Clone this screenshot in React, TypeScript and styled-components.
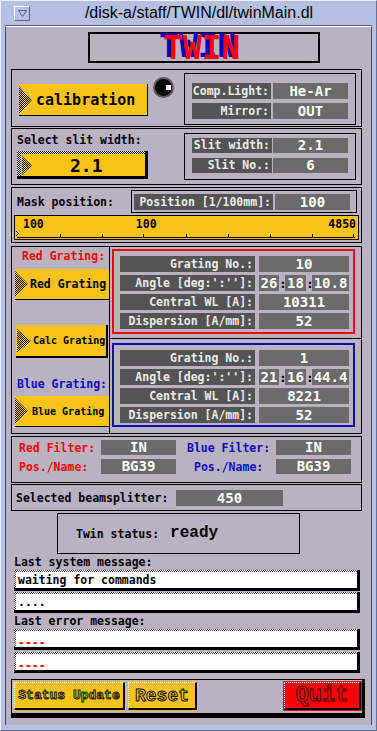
import React from 'react';
import styled, { createGlobalStyle } from 'styled-components';

const MONO = `"DejaVu Sans Mono", "Liberation Mono", monospace`;
const COURIER = `"Liberation Mono", "DejaVu Sans Mono", monospace`;
const YELLOW = '#f9c31a';
const PANEL = '#bab2c1';
const FRAME = '#b6c0e2';
const LABEL_BG = '#545454';
const VALUE_BG = '#6b6b6b';

const GlobalStyle = createGlobalStyle`
  html, body { margin: 0; padding: 0; background: ${FRAME}; }
  * { box-sizing: border-box; }
`;

const Window = styled.div`
  width: 377px;
  height: 731px;
  background: ${FRAME};
  border: 1px solid #eef1fb;
  border-right-color: #6b7394;
  border-bottom-color: #6b7394;
  padding: 0 4px 5px 4px;
  display: flex;
  flex-direction: column;
`;

const TitleBar = styled.div`
  height: 25px;
  display: flex;
  align-items: center;
  border-bottom: 1px solid #596080;
`;

const MenuButton = styled.div`
  width: 16px;
  height: 15px;
  margin-left: 9px;
  border: 1px solid #fff;
  border-right-color: #5d6486;
  border-bottom-color: #5d6486;
  display: flex;
  align-items: center;
  justify-content: center;
`;

const WindowTitle = styled.div`
  flex: 1;
  text-align: center;
  font-family: "Liberation Sans", Arial, sans-serif;
  font-size: 16px;
  color: #000;
  padding-right: 4px;
`;

const Content = styled.div`
  flex: 1;
  background: ${PANEL};
  border-top: 1px solid #fff;
  border-left: 1px solid #464a63;
  border-right: 1px solid #464a63;
  padding-top: 5px;
  display: flex;
  flex-direction: column;
`;

const TwinBox = styled.div`
  width: 232px;
  height: 31px;
  margin: 0 0 0 82px;
  border: 2px solid #000;
  display: flex;
  align-items: center;
  justify-content: center;
`;

const TwinText = styled.span`
  font-family: ${COURIER};
  font-weight: bold;
  font-size: 32px;
  line-height: 32px;
  color: #ff0000;
  text-shadow: -4px -2px 0 #0000c8;
  transform: scaleY(1.15);
  margin: 4px 4px 0 0;
`;

const Frame = styled.div<{ $mt: number; $h: number; $col?: boolean }>`
  width: 351px;
  height: ${p => p.$h}px;
  margin: ${p => p.$mt}px 0 0 5px;
  border: 1px solid #000;
  display: flex;
  flex-direction: ${p => (p.$col ? 'column' : 'row')};
  align-items: flex-start;
`;

const ReadBox = styled.div<{ $w: number; $h: number; $m: string; $pad: string; $gap: number }>`
  width: ${p => p.$w}px;
  height: ${p => p.$h}px;
  margin: ${p => p.$m};
  padding: ${p => p.$pad};
  border: 1px solid #000;
  display: flex;
  flex-direction: column;
  gap: ${p => p.$gap}px;
  flex-shrink: 0;
`;

const Row = styled.div<{ $gap: number }>`
  display: flex;
  align-items: center;
  gap: ${p => p.$gap}px;
`;

const Label = styled.div<{ $w: number; $h?: number }>`
  width: ${p => p.$w}px;
  height: ${p => p.$h ?? 16}px;
  line-height: ${p => p.$h ?? 16}px;
  background: ${LABEL_BG};
  color: #ececec;
  font-family: ${MONO};
  font-weight: bold;
  font-size: 11.5px;
  text-align: right;
  padding-right: 2px;
  white-space: nowrap;
  flex-shrink: 0;
`;

const Value = styled.div<{ $w: number; $h?: number }>`
  width: ${p => p.$w}px;
  height: ${p => p.$h ?? 16}px;
  line-height: ${p => p.$h ?? 16}px;
  background: ${VALUE_BG};
  color: #fff;
  font-family: ${MONO};
  font-weight: bold;
  font-size: 14px;
  text-align: center;
  white-space: nowrap;
  flex-shrink: 0;
`;

const Colon = styled.div`
  width: 6px;
  text-align: center;
  font-family: ${MONO};
  font-weight: bold;
  font-size: 13px;
  color: #000;
`;

const PlainText = styled.div<{ $color?: string; $m?: string }>`
  font-family: ${MONO};
  font-weight: bold;
  font-size: 11.5px;
  line-height: 14px;
  color: ${p => p.$color ?? '#000'};
  margin: ${p => p.$m ?? '0'};
  white-space: nowrap;
`;

const ArrowSvg = styled.svg`
  flex-shrink: 0;
  display: block;
`;

const ArrowMark = ({ id, w, h }: { id: string; w: number; h: number }) => (
  <ArrowSvg width={w} height={h} viewBox={`0 0 ${w} ${h}`}>
    <defs>
      <pattern id={id} width="2" height="2" patternUnits="userSpaceOnUse">
        <rect width="1" height="1" fill="#000" />
        <rect x="1" y="1" width="1" height="1" fill="#000" />
      </pattern>
    </defs>
    <polygon points={`0,0 ${w},${h / 2} 0,${h}`} fill={`url(#${id})`} />
  </ArrowSvg>
);

const YellowButton = styled.div<{ $w: number; $h: number; $m: string }>`
  width: ${p => p.$w}px;
  height: ${p => p.$h}px;
  margin: ${p => p.$m};
  background: ${YELLOW};
  display: flex;
  align-items: center;
  font-family: ${MONO};
  font-weight: bold;
  color: #000;
  white-space: nowrap;
  flex-shrink: 0;
  cursor: pointer;
`;

const CalButton = styled(YellowButton)`
  border-right: 1px solid #000;
  border-bottom: 1px solid #000;
  font-size: 15px;
  gap: 4px;
`;

const GratingButton = styled(YellowButton)<{ $size: number; $gap: number; $shadow?: boolean }>`
  font-size: ${p => p.$size}px;
  gap: ${p => p.$gap}px;
  border-bottom: ${p => (p.$shadow ? '2px' : '1px')} solid #000;
  border-right: ${p => (p.$shadow ? '2px solid #000' : 'none')};
  padding-left: ${p => (p.$shadow ? 1 : 0)}px;
`;

const SlitButton = styled.div`
  width: 131px;
  height: 28px;
  margin-top: 4px;
  padding: 3px 0 0 4px;
  background: repeating-conic-gradient(#000 0% 25%, #fff 0% 50%) 0 0 / 2px 2px;
  border-right: 3px solid #000;
  border-bottom: 3px solid #000;
  cursor: pointer;
`;

const SlitFace = styled.div`
  height: 100%;
  background: ${YELLOW};
  display: flex;
  align-items: center;
  padding-left: 1px;
  font-family: ${MONO};
  font-weight: bold;
  font-size: 18px;
  color: #000;
`;

const SlitValue = styled.span`
  margin-left: 38px;
`;

const Lamp = styled.div`
  width: 21px;
  height: 21px;
  margin: 7px 0 0 5px;
  border-radius: 50%;
  background: #000;
  border: 2px solid #5c5c5c;
  position: relative;
  flex-shrink: 0;

  &::after {
    content: '';
    position: absolute;
    left: 11px;
    top: 6px;
    width: 5px;
    height: 5px;
    background: #fff;
  }
`;

const SlitCol = styled.div`
  display: flex;
  flex-direction: column;
  width: 131px;
  margin-left: 5px;
`;

const TopRow = styled.div`
  display: flex;
  align-items: center;
  width: 100%;
`;

const Slider = styled.div`
  width: 345px;
  height: 25px;
  margin: 2px 0 0 2px;
  border: 1px solid #000;
  background: ${YELLOW};
  display: flex;
  flex-direction: column;
`;

const Scale = styled.div`
  display: flex;
  height: 14px;
  margin-top: 1px;
  padding: 0 2px 0 8px;
  font-family: ${MONO};
  font-weight: bold;
  font-size: 11.5px;
  line-height: 14px;
  color: #000;
`;

const ScaleMid = styled.span`
  margin-left: 92px;
`;

const ScaleEnd = styled.span`
  margin-left: auto;
`;

const GratingFrame = styled(Frame)`
  align-items: stretch;
`;

const LeftCol = styled.div`
  width: 98px;
  border-right: 1px solid #000;
  display: flex;
  flex-direction: column;
  padding-left: 3px;
`;

const RightCol = styled.div`
  flex: 1;
  display: flex;
  flex-direction: column;
`;

const GratingCell = styled.div<{ $h?: number; $line?: boolean }>`
  height: ${p => (p.$h ? `${p.$h}px` : 'auto')};
  flex: ${p => (p.$h ? 'none' : 1)};
  border-bottom: ${p => (p.$line ? '1px solid #000' : 'none')};
`;

const GratingBox = styled.div<{ $color: string; $mt: number; $h: number }>`
  width: 243px;
  height: ${p => p.$h}px;
  margin: ${p => p.$mt}px 0 0 2px;
  border: 2px solid ${p => p.$color};
  padding: 5px 0 0 6px;
  display: flex;
  flex-direction: column;
  gap: 3px;
`;

const AngleCells = styled.div`
  display: flex;
  align-items: center;
  width: 90px;
`;

const FilterGrid = styled.div`
  display: grid;
  grid-template-columns: 82px 75px 11px 89px 75px;
  grid-auto-rows: 15px;
  row-gap: 4px;
  margin: 3px 0 0 7px;
  align-items: center;
`;

const GridLabel = styled(PlainText)<{ $indent?: number }>`
  padding-left: ${p => p.$indent ?? 0}px;
`;

const BeamRow = styled.div`
  display: flex;
  align-items: center;
  height: 100%;
  padding-left: 4px;
`;

const BeamLabel = styled(PlainText)`
  width: 160px;
`;

const StatusBox = styled.div`
  width: 243px;
  height: 41px;
  margin: 2px 0 0 51px;
  border: 1px solid #000;
  display: flex;
  align-items: center;
  padding: 1px 0 0 18px;
  gap: 11px;
`;

const StatusWord = styled.span`
  font-family: ${COURIER};
  font-weight: bold;
  font-size: 16px;
  color: #000;
  margin-top: -2px;
`;

const MsgLabel = styled.div<{ $mt: number }>`
  font-family: ${MONO};
  font-weight: bold;
  font-size: 11.5px;
  line-height: 16px;
  height: 16px;
  margin: ${p => p.$mt}px 0 0 8px;
  color: #000;
`;

const Field = styled.div<{ $mt: number }>`
  width: 346px;
  height: 21px;
  margin: ${p => p.$mt}px 0 0 8px;
  padding: 2px 0 0 2px;
  background: repeating-conic-gradient(#555 0% 25%, #fff 0% 50%) 0 0 / 2px 2px;
  border-right: 3px solid #000;
  border-bottom: 3px solid #000;
`;

const FieldText = styled.div<{ $color?: string }>`
  height: 100%;
  background: #fff;
  padding: 1px 0 0 2px;
  font-family: ${MONO};
  font-weight: bold;
  font-size: 11.5px;
  line-height: 15px;
  color: ${p => p.$color ?? '#000'};
  white-space: nowrap;
`;

const LowDash = styled.span`
  display: inline-block;
  transform: translateY(4px);
`;

const ButtonBar = styled.div`
  width: 354px;
  height: 39px;
  margin: 6px 0 0 5px;
  border: 1px solid #000;
  border-right-width: 3px;
  border-bottom-width: 5px;
  padding: 2px 1px 0 2px;
  display: flex;
  gap: 3px;
`;

const BarButton = styled.div<{ $w: number; $bg: string; $size: number; $ink: string; $push?: boolean }>`
  width: ${p => p.$w}px;
  height: 28px;
  margin-left: ${p => (p.$push ? 'auto' : '0')};
  background: ${p => p.$bg};
  border: 1px dotted #fff;
  border-right: 2px solid #000;
  border-bottom: 2px solid #000;
  outline: 1px solid ${p => p.$bg};
  display: flex;
  align-items: center;
  justify-content: center;
  font-family: ${COURIER};
  font-weight: bold;
  font-size: ${p => p.$size}px;
  color: ${p => p.$bg};
  -webkit-text-stroke: 1px ${p => p.$ink};
  white-space: nowrap;
  cursor: pointer;
`;

const SliderTicks = () => {
  const ticks = [45, 87, 128, 171, 213, 255, 297, 338];
  return (
    <svg width="343" height="8" viewBox="0 0 343 8" style={{ display: 'block' }}>
      <line x1="2" y1="6.5" x2="340" y2="6.5" stroke="#000" strokeWidth="1" />
      {ticks.map(x => (
        <line key={x} x1={x + 0.5} y1="3" x2={x + 0.5} y2="7" stroke="#000" strokeWidth="1" />
      ))}
      <rect x="1" y="0" width="1" height="1" fill="#000" />
      <rect x="2" y="1" width="1" height="1" fill="#000" />
      <rect x="3" y="2" width="1" height="1" fill="#000" />
      <rect x="2" y="3" width="1" height="1" fill="#000" />
      <rect x="1" y="4" width="1" height="1" fill="#000" />
    </svg>
  );
};

type Grating = { no: string; angle: [string, string, string]; wl: string; disp: string };

const GratingReadout = ({ g }: { g: Grating }) => (
  <>
    <Row $gap={4}>
      <Label $w={135}>Grating No.:</Label>
      <Value $w={90}>{g.no}</Value>
    </Row>
    <Row $gap={4}>
      <Label $w={135}>Angle [deg:':'']:</Label>
      <AngleCells>
        <Value $w={20}>{g.angle[0]}</Value>
        <Colon>:</Colon>
        <Value $w={21}>{g.angle[1]}</Value>
        <Colon>:</Colon>
        <Value $w={37}>{g.angle[2]}</Value>
      </AngleCells>
    </Row>
    <Row $gap={4}>
      <Label $w={135}>Central WL [A]:</Label>
      <Value $w={90}>{g.wl}</Value>
    </Row>
    <Row $gap={4}>
      <Label $w={135}>Dispersion [A/mm]:</Label>
      <Value $w={90}>{g.disp}</Value>
    </Row>
  </>
);

const red: Grating = { no: '10', angle: ['26', '18', '10.8'], wl: '10311', disp: '52' };
const blue: Grating = { no: '1', angle: ['21', '16', '44.4'], wl: '8221', disp: '52' };

export default function App() {
  return (
    <>
      <GlobalStyle />
      <Window>
        <TitleBar>
          <MenuButton>
            <svg width="9" height="7" viewBox="0 0 9 7">
              <polygon points="0.5,0.5 8.5,0.5 4.5,6.5" fill="none" stroke="#5d6486" strokeWidth="1" />
            </svg>
          </MenuButton>
          <WindowTitle>/disk-a/staff/TWIN/dl/twinMain.dl</WindowTitle>
        </TitleBar>

        <Content>
          <TwinBox>
            <TwinText>TWIN</TwinText>
          </TwinBox>

          <Frame $mt={6} $h={58}>
            <CalButton $w={129} $h={32} $m="14px 0 0 7px">
              <ArrowMark id="arCal" w={13} h={28} />
              calibration
            </CalButton>
            <Lamp />
            <ReadBox $w={172} $h={52} $m="3px 0 0 10px" $pad="9px 0 0 7px" $gap={4}>
              <Row $gap={2}>
                <Label $w={79}>Comp.Light:</Label>
                <Value $w={75}>He-Ar</Value>
              </Row>
              <Row $gap={2}>
                <Label $w={79}>Mirror:</Label>
                <Value $w={75}>OUT</Value>
              </Row>
            </ReadBox>
          </Frame>

          <Frame $mt={1} $h={57}>
            <SlitCol>
              <PlainText $m="4px 0 0 0">Select slit width:</PlainText>
              <SlitButton>
                <SlitFace>
                  <ArrowMark id="arSlit" w={10} h={19} />
                  <SlitValue>2.1</SlitValue>
                </SlitFace>
              </SlitButton>
            </SlitCol>
            <ReadBox $w={172} $h={47} $m="4px 0 0 36px" $pad="4px 0 0 7px" $gap={5}>
              <Row $gap={1}>
                <Label $w={80} $h={15}>Slit width:</Label>
                <Value $w={75} $h={15}>2.1</Value>
              </Row>
              <Row $gap={1}>
                <Label $w={80} $h={15}>Slit No.:</Label>
                <Value $w={75} $h={15}>6</Value>
              </Row>
            </ReadBox>
          </Frame>

          <Frame $mt={2} $h={56} $col>
            <TopRow>
              <PlainText $m="2px 0 0 5px">Mask position:</PlainText>
              <ReadBox $w={226} $h={23} $m="2px 4px 0 auto" $pad="3px 0 0 2px" $gap={0}>
                <Row $gap={2}>
                  <Label $w={139}>Position [1/100mm]:</Label>
                  <Value $w={75}>100</Value>
                </Row>
              </ReadBox>
            </TopRow>
            <Slider>
              <Scale>
                <span>100</span>
                <ScaleMid>100</ScaleMid>
                <ScaleEnd>4850</ScaleEnd>
              </Scale>
              <SliderTicks />
            </Slider>
          </Frame>

          <GratingFrame $mt={3} $h={188}>
            <LeftCol>
              <PlainText $color="#ff0000" $m="2px 0 0 7px">Red Grating:</PlainText>
              <GratingButton $w={94} $h={31} $m="6px 0 0 0" $size={11.5} $gap={2}>
                <ArrowMark id="arRed" w={13} h={26} />
                Red Grating
              </GratingButton>
              <GratingButton $w={92} $h={33} $m="25px 0 0 1px" $size={10} $gap={2} $shadow>
                <ArrowMark id="arCalc" w={14} h={24} />
                Calc Grating
              </GratingButton>
              <PlainText $color="#0a0ac8" $m="19px 0 0 2px">Blue Grating:</PlainText>
              <GratingButton $w={94} $h={31} $m="5px 0 0 0" $size={10} $gap={4}>
                <ArrowMark id="arBlue" w={13} h={26} />
                Blue Grating
              </GratingButton>
            </LeftCol>
            <RightCol>
              <GratingCell $h={92} $line>
                <GratingBox $color="#ff0000" $mt={2} $h={85}>
                  <GratingReadout g={red} />
                </GratingBox>
              </GratingCell>
              <GratingCell>
                <GratingBox $color="#0c0cb0" $mt={4} $h={84}>
                  <GratingReadout g={blue} />
                </GratingBox>
              </GratingCell>
            </RightCol>
          </GratingFrame>

          <Frame $mt={2} $h={47}>
            <FilterGrid>
              <GridLabel $color="#ff0000">Red Filter:</GridLabel>
              <Value $w={75} $h={15}>IN</Value>
              <span />
              <GridLabel $color="#0a0ac8">Blue Filter:</GridLabel>
              <Value $w={75} $h={15}>IN</Value>
              <GridLabel $color="#ff0000">Pos./Name:</GridLabel>
              <Value $w={75} $h={15}>BG39</Value>
              <span />
              <GridLabel $color="#0a0ac8" $indent={7}>Pos./Name:</GridLabel>
              <Value $w={75} $h={15}>BG39</Value>
            </FilterGrid>
          </Frame>

          <Frame $mt={1} $h={27}>
            <BeamRow>
              <BeamLabel>Selected beamsplitter:</BeamLabel>
              <Value $w={107} $h={16}>450</Value>
            </BeamRow>
          </Frame>

          <StatusBox>
            <PlainText>Twin status:</PlainText>
            <StatusWord>ready</StatusWord>
          </StatusBox>

          <MsgLabel $mt={0}>Last system message:</MsgLabel>
          <Field $mt={0}>
            <FieldText>waiting for commands</FieldText>
          </Field>
          <Field $mt={1}>
            <FieldText>....</FieldText>
          </Field>
          <MsgLabel $mt={0}>Last error message:</MsgLabel>
          <Field $mt={0}>
            <FieldText $color="#ff0000"><LowDash>----</LowDash></FieldText>
          </Field>
          <Field $mt={2}>
            <FieldText $color="#ff0000"><LowDash>----</LowDash></FieldText>
          </Field>

          <ButtonBar>
            <BarButton $w={111} $bg={YELLOW} $size={13} $ink="#222">Status Update</BarButton>
            <BarButton $w={69} $bg={YELLOW} $size={18} $ink="#111">Reset</BarButton>
            <BarButton $w={77} $bg="#ff0000" $size={22} $ink="#3a0000" $push>Quit</BarButton>
          </ButtonBar>
        </Content>
      </Window>
    </>
  );
}
